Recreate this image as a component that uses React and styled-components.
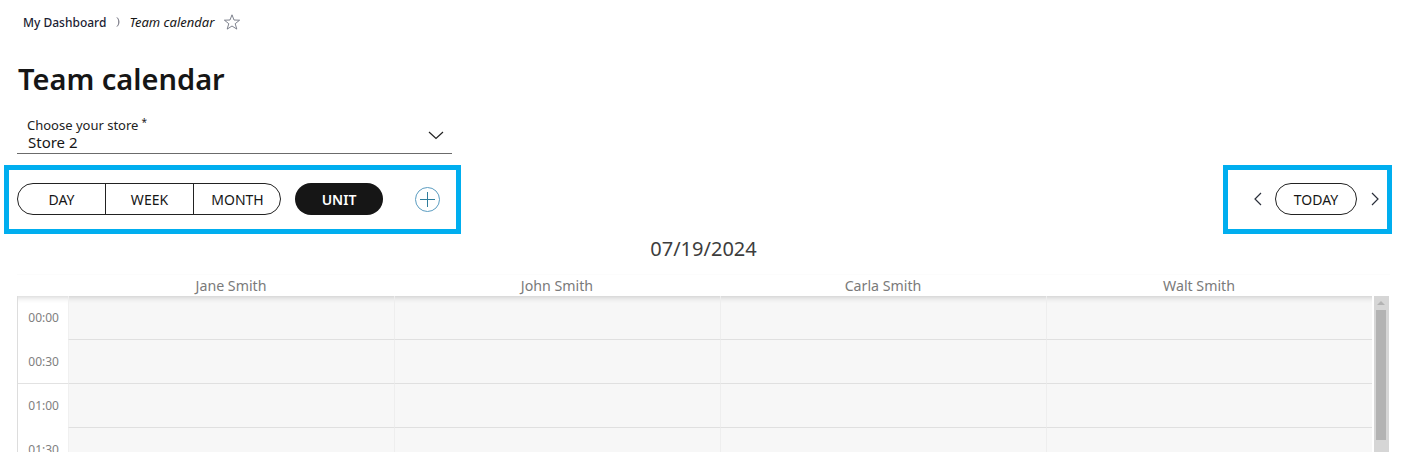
import styled, { createGlobalStyle } from 'styled-components';

const GlobalStyle = createGlobalStyle`
    html, body {
        margin: 0;
        padding: 0;
        height: 452px;
        overflow: hidden;
        background: #fff;
        font-family: 'Noto Sans', sans-serif;
    }
`;

const Page = styled.div`
    width: 1402px;
    height: 452px;
    overflow: hidden;
    box-sizing: border-box;
    padding: 12px 12px 0 17px;
    color: #161616;
`;

const Breadcrumb = styled.nav`
    display: flex;
    align-items: center;
    height: 20px;
    padding-left: 6px;
    font-size: 12px;
    font-weight: 500;
    color: #1b2233;
`;

const CrumbCurrent = styled.span`
    font-style: italic;
    font-weight: 400;
    font-size: 13px;
    color: #161616;
`;

const CrumbIcon = styled.svg`
    display: block;
    margin: 0 7px 0 10px;
`;

const StarIcon = styled.svg`
    display: block;
    margin-left: 9px;
`;

const Title = styled.h1`
    margin: 26px 0 0 1px;
    font-size: 29px;
    line-height: 42px;
    font-weight: 600;
    color: #161616;
`;

const StoreField = styled.div`
    position: relative;
    width: 435px;
    height: 38px;
    box-sizing: border-box;
    margin-top: 16px;
    border-bottom: 1px solid #6b6b6b;
    padding: 0 0 0 10px;
`;

const StoreLabel = styled.div`
    font-size: 13px;
    line-height: 18px;
    color: #222;

    sup {
        font-size: 10px;
        line-height: 0;
        margin-left: 3px;
        vertical-align: 4px;
    }
`;

const StoreValue = styled.div`
    font-size: 15px;
    line-height: 17px;
    padding-left: 1px;
    color: #161616;
`;

const StoreChevron = styled.svg`
    position: absolute;
    right: 8px;
    top: 15px;
`;

const Toolbar = styled.div`
    display: flex;
    justify-content: space-between;
    margin: 11px 0 0 -13px;
    width: 1388px;
`;

const Highlight = styled.div`
    display: flex;
    align-items: center;
    box-sizing: border-box;
    height: 69px;
    border: 5px solid #00aeef;
    padding: ${props => props.$padding};
    width: ${props => props.$width}px;
`;

const Segments = styled.div`
    display: flex;
    box-sizing: border-box;
    width: 264px;
    height: 32px;
    border: 1px solid #222;
    border-radius: 16px;
    overflow: hidden;
`;

const Segment = styled.div`
    flex: 0 0 87px;
    box-sizing: border-box;
    display: flex;
    align-items: center;
    justify-content: center;
    font-size: 14px;
    color: #161616;
    & + & {
        border-left: 1px solid #222;
        flex-basis: 88px;
    }
`;

const UnitButton = styled.div`
    display: flex;
    align-items: center;
    justify-content: center;
    width: 88px;
    height: 32px;
    margin-left: 14px;
    border-radius: 16px;
    background: #161616;
    color: #fff;
    font-size: 14px;
    font-weight: 600;
`;

const PlusIcon = styled.svg`
    display: block;
    margin-left: 32px;
`;

const TodayButton = styled.div`
    display: flex;
    align-items: center;
    justify-content: center;
    box-sizing: border-box;
    width: 82px;
    height: 32px;
    margin: 0 14px 0 13px;
    border: 1px solid #222;
    border-radius: 16px;
    font-size: 14px;
    color: #161616;
`;

const ArrowIcon = styled.svg`
    display: block;
`;

const DateHeading = styled.div`
    width: 1373px;
    text-align: center;
    font-size: 20px;
    line-height: 28px;
    margin-top: 1px;
    color: #3d3d3d;
`;

const ColumnHeader = styled.div`
    display: grid;
    grid-template-columns: repeat(3, 326px) 306px;
    box-sizing: border-box;
    width: 1373px;
    height: 22px;
    margin-top: 11px;
    padding: 1px 0 0 51px;
    border-top: 1px solid #fcfcfc;
`;

const ColumnName = styled.div`
    text-align: center;
    font-size: 14.2px;
    line-height: 20px;
    color: #7a7a7a;
`;

const CalendarBody = styled.div`
    display: flex;
    width: 1373px;
    height: 160px;
`;

const TimeColumn = styled.div`
    box-sizing: border-box;
    width: 51px;
    flex: none;
    border-left: 1px solid #ddd;
    background: #fff;
    box-shadow: inset 0 7px 6px -6px rgba(0, 0, 0, 0.2);
`;

const TimeCell = styled.div`
    box-sizing: border-box;
    height: 44px;
    padding-top: 14px;
    padding-right: 9px;
    text-align: right;
    font-size: 12px;
    line-height: 16px;
    color: #808080;
    border-bottom: 1px solid ${props => (props.$hourEnd ? '#e2e2e2' : 'transparent')};
`;

const Grid = styled.div`
    display: grid;
    grid-template-columns: repeat(4, 326px);
    grid-auto-rows: 44px;
    flex: none;
    width: 1304px;
    background: #f7f7f7;
    box-shadow: inset 0 7px 6px -6px rgba(0, 0, 0, 0.2);
`;

const Slot = styled.div`
    box-sizing: border-box;
    border-left: 1px solid #eeeeee;
    border-bottom: 1px solid #e0e0e0;
    &:nth-child(4n + 1) {
        border-left: 1px solid #f0f0f0;
    }
`;

const Scrollbar = styled.div`
    position: relative;
    flex: none;
    width: 15px;
    margin-left: 2px;
    background: #d6d6d6;
`;

const ScrollArrow = styled.div`
    position: absolute;
    top: 5px;
    left: 3px;
    width: 0;
    height: 0;
    border-left: 4px solid transparent;
    border-right: 4px solid transparent;
    border-bottom: 4px solid #b3b3b3;
`;

const ScrollThumb = styled.div`
    position: absolute;
    top: 14px;
    left: 2px;
    width: 10px;
    height: 130px;
    background: #b3b3b3;
`;

const people = ['Jane Smith', 'John Smith', 'Carla Smith', 'Walt Smith'];
const times = ['00:00', '00:30', '01:00', '01:30'];

const App = () => (
    <Page>
        <GlobalStyle />
        <Breadcrumb>
            My Dashboard
            <CrumbIcon width="6" height="12" viewBox="0 0 6 12" fill="none">
                <path d="M1 1.5 C3.5 4 3.5 8 1 10.5" stroke="#5a5a6a" strokeWidth="1" />
            </CrumbIcon>
            <CrumbCurrent>Team calendar</CrumbCurrent>
            <StarIcon width="18" height="18" viewBox="0 0 18 18" fill="none">
                <path
                    d="M9 1.8 L11 7 L16.6 7.2 L12.2 10.7 L13.8 16.1 L9 13 L4.2 16.1 L5.8 10.7 L1.4 7.2 L7 7 Z"
                    stroke="#6f7480"
                    strokeWidth="0.9"
                />
            </StarIcon>
        </Breadcrumb>
        <Title>Team calendar</Title>
        <StoreField>
            <StoreLabel>
                Choose your store<sup>*</sup>
            </StoreLabel>
            <StoreValue>Store 2</StoreValue>
            <StoreChevron width="16" height="9" viewBox="0 0 16 9" fill="none">
                <path d="M1 1 L8 7.5 L15 1" stroke="#222" strokeWidth="1.2" />
            </StoreChevron>
        </StoreField>
        <Toolbar>
            <Highlight $width={457} $padding="0 0 1px 8px">
                <Segments>
                    <Segment>DAY</Segment>
                    <Segment>WEEK</Segment>
                    <Segment>MONTH</Segment>
                </Segments>
                <UnitButton>UNIT</UnitButton>
                <PlusIcon width="25" height="25" viewBox="0 0 25 25" fill="none">
                    <circle cx="12.5" cy="12.5" r="12" stroke="#5a9cc0" strokeWidth="1" />
                    <path d="M12.5 5 V20 M5 12.5 H20" stroke="#2f7d9c" strokeWidth="1" />
                </PlusIcon>
            </Highlight>
            <Highlight $width={169} $padding="0 0 1px 26px">
                <ArrowIcon width="8" height="14" viewBox="0 0 8 14" fill="none">
                    <path d="M7 1 L1 7 L7 13" stroke="#2a2f3a" strokeWidth="1.2" />
                </ArrowIcon>
                <TodayButton>TODAY</TodayButton>
                <ArrowIcon width="8" height="14" viewBox="0 0 8 14" fill="none">
                    <path d="M1 1 L7 7 L1 13" stroke="#2a2f3a" strokeWidth="1.2" />
                </ArrowIcon>
            </Highlight>
        </Toolbar>
        <DateHeading>07/19/2024</DateHeading>
        <ColumnHeader>
            {people.map(name => (
                <ColumnName key={name}>{name}</ColumnName>
            ))}
        </ColumnHeader>
        <CalendarBody>
            <TimeColumn>
                {times.map((time, i) => (
                    <TimeCell key={time} $hourEnd={i % 2 === 1}>
                        {time}
                    </TimeCell>
                ))}
            </TimeColumn>
            <Grid>
                {Array.from({ length: 16 }, (_, i) => (
                    <Slot key={i} />
                ))}
            </Grid>
            <Scrollbar>
                <ScrollArrow />
                <ScrollThumb />
            </Scrollbar>
        </CalendarBody>
    </Page>
);

export default App;
